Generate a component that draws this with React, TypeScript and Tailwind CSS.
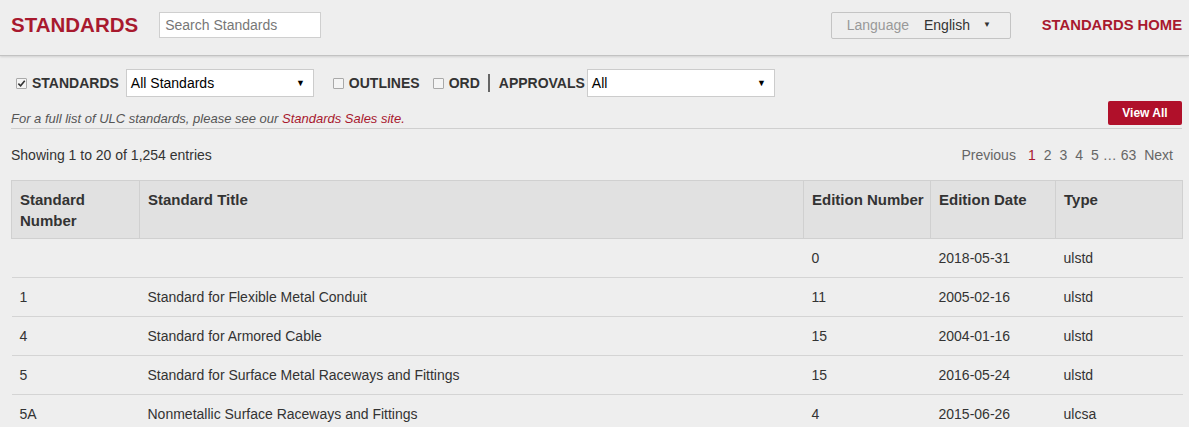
import React from 'react';

const RED = 'text-[#a8192e]';

type Row = { num: string; title: string; edition: string; date: string; type: string };

const rows: Row[] = [
  { num: '', title: '', edition: '0', date: '2018-05-31', type: 'ulstd' },
  { num: '1', title: 'Standard for Flexible Metal Conduit', edition: '11', date: '2005-02-16', type: 'ulstd' },
  { num: '4', title: 'Standard for Armored Cable', edition: '15', date: '2004-01-16', type: 'ulstd' },
  { num: '5', title: 'Standard for Surface Metal Raceways and Fittings', edition: '15', date: '2016-05-24', type: 'ulstd' },
  { num: '5A', title: 'Nonmetallic Surface Raceways and Fittings', edition: '4', date: '2015-06-26', type: 'ulcsa' },
];

const Check: React.FC<{ checked?: boolean }> = ({ checked }) => (
  <span className="inline-flex w-[11px] h-[11px] items-center justify-center border border-[#a9a9a9] bg-[#f4f4f4] rounded-[1px]">
    {checked && (
      <svg viewBox="0 0 10 10" className="w-[9px] h-[9px]">
        <path d="M1.5 5.2 L4 7.6 L8.6 2" fill="none" stroke="#333" strokeWidth="1.8" />
      </svg>
    )}
  </span>
);

const Select: React.FC<{ value: string; width: string }> = ({ value, width }) => (
  <div className={`${width} h-[28px] bg-white border border-[#cccccc] flex items-center justify-between pl-[4px] pr-[8px] text-[14px] text-black`}>
    <span>{value}</span>
    <span className="text-[9px] leading-none">▼</span>
  </div>
);

export default function App() {
  return (
    <div className="min-h-[427px] bg-[#eeeeee] text-[#333] font-['Liberation_Sans',Arial,sans-serif]">
      {/* header */}
      <div className="h-[56px] flex items-center pl-[11px] pr-[7px] pb-[5px] border-b border-[#c2c2c2] shadow-[0_1px_2px_rgba(0,0,0,0.12)]">
        <div className={`text-[20.5px] font-bold ${RED}`}>STANDARDS</div>
        <div className="ml-[21px] w-[162px] h-[26px] bg-white border border-[#cfcfcf] flex items-center pl-[5px] text-[14px] text-[#777]">
          Search Standards
        </div>
        <div className="flex-1" />
        <div className="w-[180px] h-[27px] border border-[#c4c4c4] rounded-[2px] flex items-center pl-[15px] text-[14px]">
          <span className="text-[#999]">Language</span>
          <span className="ml-[15px] text-[#333]">English</span>
          <span className="ml-[13px] text-[8px]">▼</span>
        </div>
        <div className={`ml-[31px] text-[14.8px] font-bold ${RED}`}>STANDARDS HOME</div>
      </div>

      <div className="pl-[11px] pr-[7px]">
        {/* filters */}
        <div className="mt-[13px] flex items-center h-[28px] text-[14px] font-bold">
          <div className="ml-[5px] flex items-center gap-[5px]">
            <Check checked />
            <span>STANDARDS</span>
          </div>
          <div className="ml-[7px] font-normal">
            <Select value="All Standards" width="w-[188px]" />
          </div>
          <div className="ml-[19px] flex items-center gap-[5px]">
            <Check />
            <span>OUTLINES</span>
          </div>
          <div className="ml-[13px] flex items-center gap-[5px]">
            <Check />
            <span>ORD</span>
          </div>
          <div className="ml-[8px] w-[2px] h-[18px] bg-[#666]" />
          <span className="ml-[9px]">APPROVALS</span>
          <div className="ml-[2px] font-normal">
            <Select value="All" width="w-[188px]" />
          </div>
        </div>

        {/* note + view all */}
        <div className="mt-[4px] flex items-end justify-between border-b border-[#cfcfcf] pb-[1px]">
          <p className="italic text-[13px] text-[#555] leading-[17px]">
            For a full list of ULC standards, please see our <span className={RED}>Standards Sales site.</span>
          </p>
          <button className="mb-[2px] w-[74px] h-[24px] bg-[#b0102a] text-white text-[12px] font-bold rounded-[2px]">
            View All
          </button>
        </div>

        {/* info + pagination */}
        <div className="mt-[16px] flex items-center justify-between text-[14px]">
          <span>Showing 1 to 20 of 1,254 entries</span>
          <div className="flex items-center gap-[8px] pr-[9px] text-[#666]">
            <span className="mr-[4px]">Previous</span>
            <span className={RED}>1</span>
            <span>2</span>
            <span>3</span>
            <span>4</span>
            <span>5 … 63</span>
            <span>Next</span>
          </div>
        </div>

        {/* table */}
        <table className="mt-[14px] w-[1171px] border-collapse text-left table-fixed">
          <colgroup>
            <col className="w-[128px]" />
            <col className="w-[664px]" />
            <col className="w-[127px]" />
            <col className="w-[125px]" />
            <col className="w-[127px]" />
          </colgroup>
          <thead>
            <tr className="bg-[#e1e1e1] text-[15px] font-bold leading-[21px]">
              <th className="h-[58px] align-top pt-[8px] pl-[8px] border border-[#d0d0d0]">Standard<br />Number</th>
              <th className="align-top pt-[8px] pl-[8px] border border-[#d0d0d0]">Standard Title</th>
              <th className="align-top pt-[8px] pl-[8px] border border-[#d0d0d0]">Edition Number</th>
              <th className="align-top pt-[8px] pl-[8px] border border-[#d0d0d0]">Edition Date</th>
              <th className="align-top pt-[8px] pl-[8px] border border-[#d0d0d0]">Type</th>
            </tr>
          </thead>
          <tbody className="text-[14px]">
            {rows.map((r, i) => (
              <tr key={i} className="h-[39px] border-b border-[#d4d4d4]">
                <td className="pl-[8px]">{r.num}</td>
                <td className="pl-[8px]">{r.title}</td>
                <td className="pl-[8px]">{r.edition}</td>
                <td className="pl-[8px]">{r.date}</td>
                <td className="pl-[8px]">{r.type}</td>
              </tr>
            ))}
          </tbody>
        </table>
      </div>
    </div>
  );
}
